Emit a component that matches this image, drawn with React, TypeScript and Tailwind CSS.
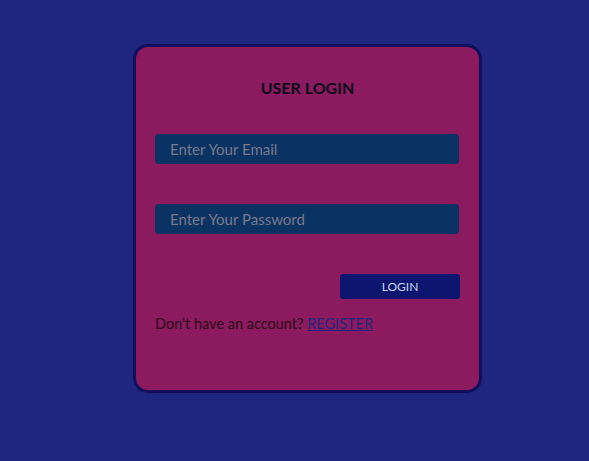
import React from "react";

export default function App() {
  return (
    <div
      className="w-[589px] h-[461px] bg-[#1e2680] pt-[44px] pl-[133px]"
      style={{ fontFamily: "Lato, 'Open Sans', sans-serif" }}
    >
      <div className="w-[349px] h-[349px] bg-[#8b1a5e] border-[3px] border-[#0f0f5e] rounded-[15px] px-[19px] pt-[30px]">
        <h1 className="text-center text-[16px] font-bold text-[#0a0a1a] leading-[22px]">USER LOGIN</h1>
        <div className="mt-[35px] h-[30px] w-[304px] rounded-[4px] bg-[#0a3263] flex items-center pl-[15px] text-[15px] text-[#7a7a8c]">
          Enter Your Email
        </div>
        <div className="mt-[40px] h-[30px] w-[304px] rounded-[4px] bg-[#0a3263] flex items-center pl-[15px] text-[15px] text-[#7a7a8c]">
          Enter Your Password
        </div>
        <div className="mt-[40px] flex justify-end w-[305px]">
          <div className="w-[120px] h-[25px] rounded-[3px] bg-[#0c1570] flex items-center justify-center text-[12px] text-[#c8d8f0]">
            LOGIN
          </div>
        </div>
        <div className="mt-[15px] text-[14.5px] text-[#2a0a14] leading-[20px]">
          Don't have an account?{" "}
          <span className="underline text-[#1e2680]">REGISTER</span>
        </div>
      </div>
    </div>
  );
}
